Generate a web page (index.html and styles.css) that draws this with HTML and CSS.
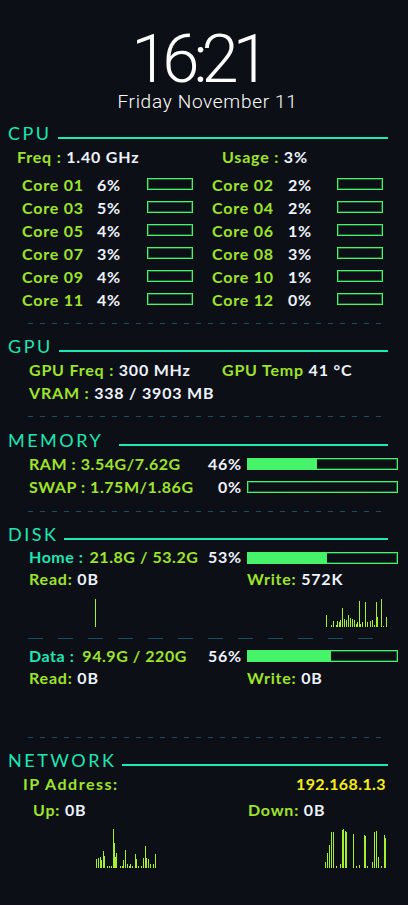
FILE: index.html
```html
<!DOCTYPE html>
<html>
<head>
<meta charset="utf-8">
<link rel="stylesheet" href="styles.css">
</head>
<body>
<div class="clock">16:21</div>
<div class="date">Friday November 11</div>

<div class="head m13"><span class="title">CPU</span><span class="rule"></span></div>
<div class="row freq">
  <span class="c205"><span class="lbl">Freq :</span> 1.40 GHz</span>
  <span><span class="lbl">Usage :</span> 3%</span>
</div>
<div class="cores">
  <div class="core"><span class="lbl">Core 01</span><span>6%</span><span class="cbar"></span><span></span><span class="lbl">Core 02</span><span>2%</span><span class="cbar"></span></div>
  <div class="core"><span class="lbl">Core 03</span><span>5%</span><span class="cbar"></span><span></span><span class="lbl">Core 04</span><span>2%</span><span class="cbar"></span></div>
  <div class="core"><span class="lbl">Core 05</span><span>4%</span><span class="cbar"></span><span></span><span class="lbl">Core 06</span><span>1%</span><span class="cbar"></span></div>
  <div class="core"><span class="lbl">Core 07</span><span>3%</span><span class="cbar"></span><span></span><span class="lbl">Core 08</span><span>3%</span><span class="cbar"></span></div>
  <div class="core"><span class="lbl">Core 09</span><span>4%</span><span class="cbar"></span><span></span><span class="lbl">Core 10</span><span>1%</span><span class="cbar"></span></div>
  <div class="core"><span class="lbl">Core 11</span><span>4%</span><span class="cbar"></span><span></span><span class="lbl">Core 12</span><span>0%</span><span class="cbar"></span></div>
</div>
<div class="dash m12"></div>

<div class="head m13"><span class="title">GPU</span><span class="rule"></span></div>
<div class="row p29">
  <span class="c193"><span class="lbl">GPU Freq :</span> 300 MHz</span>
  <span><span class="lbl">GPU Temp</span> 41 °C</span>
</div>
<div class="row p29"><span><span class="lbl">VRAM :</span> 338 / 3903 MB</span></div>
<div class="dash m12"></div>

<div class="head m14"><span class="title">MEMORY</span><span class="rule wide"></span></div>
<div class="row p29">
  <span class="mlabel lbl">RAM : 3.54G/7.62G</span><span class="pct">46%</span>
  <span class="bar"><span class="fill" style="width:46%"></span></span>
</div>
<div class="row p29">
  <span class="mlabel lbl">SWAP : 1.75M/1.86G</span><span class="pct">0%</span>
  <span class="bar"><span class="fill" style="width:0%"></span></span>
</div>
<div class="dash m13"></div>

<div class="head m13"><span class="title">DISK</span><span class="rule"></span></div>
<div class="row p29 h21">
  <span class="mlabel"><span class="teal">Home :</span><span class="lbl gapv">21.8G / 53.2G</span></span><span class="pct">53%</span>
  <span class="bar"><span class="fill" style="width:53%"></span></span>
</div>
<div class="row p29">
  <span class="c218"><span class="lbl">Read:</span> 0B</span>
  <span><span class="lbl">Write:</span> 572K</span>
</div>
<svg class="graph g30" viewBox="0 0 408 30" width="408" height="30">
  <g fill="#a6ee30">
    <rect x="95" y="2" width="1" height="28"/>
    <rect x="326" y="18" width="1" height="12"/>
    <rect x="331" y="28" width="1" height="2"/>
    <rect x="333" y="24" width="1" height="6"/>
    <rect x="336" y="28" width="1" height="2"/>
    <rect x="337" y="24" width="1" height="6"/>
    <rect x="339" y="25" width="1" height="5"/>
    <rect x="340" y="23" width="1" height="7"/>
    <rect x="342" y="11" width="1" height="19"/>
    <rect x="344" y="22" width="1" height="8"/>
    <rect x="346" y="23" width="1" height="7"/>
    <rect x="348" y="18" width="1" height="12"/>
    <rect x="350" y="21" width="1" height="9"/>
    <rect x="352" y="22" width="1" height="8"/>
    <rect x="354" y="23" width="1" height="7"/>
    <rect x="356" y="27" width="1" height="3"/>
    <rect x="357" y="25" width="1" height="5"/>
    <rect x="359" y="4" width="1" height="26"/>
    <rect x="360" y="27" width="1" height="3"/>
    <rect x="362" y="25" width="1" height="5"/>
    <rect x="365" y="5" width="1" height="25"/>
    <rect x="367" y="25" width="1" height="5"/>
    <rect x="370" y="24" width="1" height="6"/>
    <rect x="372" y="23" width="1" height="7"/>
    <rect x="374" y="28" width="1" height="2"/>
    <rect x="376" y="5" width="1" height="25"/>
    <rect x="377" y="20" width="1" height="10"/>
    <rect x="381" y="2" width="1" height="28"/>
    <rect x="383" y="29" width="1" height="1"/>
    <rect x="386" y="20" width="1" height="10"/>
  </g>
</svg>
<div class="dash long m11"></div>
<div class="row p29 h21 m6">
  <span class="mlabel"><span class="teal">Data :</span><span class="lbl gapd">94.9G / 220G</span></span><span class="pct">56%</span>
  <span class="bar data"><span class="fill" style="width:56%"></span></span>
</div>
<div class="row p29">
  <span class="c218"><span class="lbl">Read:</span> 0B</span>
  <span><span class="lbl">Write:</span> 0B</span>
</div>
<div class="dash m48"></div>

<div class="head m13"><span class="title">NETWORK</span><span class="rule"></span></div>
<div class="row ip">
  <span class="lbl iplbl">IP Address:</span><span class="yellow ipval">192.168.1.3</span>
</div>
<div class="row up m3">
  <span class="c215"><span class="lbl">Up:</span> 0B</span>
  <span><span class="lbl">Down:</span> 0B</span>
</div>
<svg class="graph g40" viewBox="0 0 408 40" width="408" height="40">
  <g fill="#a6ee30">
    <rect x="96" y="31" width="1" height="9"/>
    <rect x="98" y="30" width="1" height="10"/>
    <rect x="100" y="29" width="1" height="11"/>
    <rect x="101" y="32" width="1" height="8"/>
    <rect x="103" y="23" width="1" height="17"/>
    <rect x="104" y="28" width="1" height="12"/>
    <rect x="107" y="38" width="1" height="2"/>
    <rect x="109" y="38" width="1" height="2"/>
    <rect x="111" y="38" width="1" height="2"/>
    <rect x="113" y="1" width="1" height="39"/>
    <rect x="114" y="15" width="1" height="25"/>
    <rect x="115" y="29" width="1" height="11"/>
    <rect x="116" y="25" width="1" height="15"/>
    <rect x="120" y="38" width="1" height="2"/>
    <rect x="122" y="38" width="1" height="2"/>
    <rect x="123" y="32" width="1" height="8"/>
    <rect x="125" y="22" width="1" height="18"/>
    <rect x="127" y="36" width="1" height="4"/>
    <rect x="129" y="38" width="1" height="2"/>
    <rect x="130" y="36" width="1" height="4"/>
    <rect x="132" y="38" width="1" height="2"/>
    <rect x="135" y="26" width="1" height="14"/>
    <rect x="136" y="31" width="1" height="9"/>
    <rect x="138" y="38" width="1" height="2"/>
    <rect x="141" y="38" width="1" height="2"/>
    <rect x="143" y="30" width="1" height="10"/>
    <rect x="145" y="18" width="1" height="22"/>
    <rect x="146" y="30" width="1" height="10"/>
    <rect x="148" y="31" width="1" height="9"/>
    <rect x="150" y="36" width="1" height="4"/>
    <rect x="153" y="36" width="1" height="4"/>
    <rect x="155" y="26" width="1" height="14"/>

    <rect x="325" y="34" width="1" height="6"/>
    <rect x="327" y="25" width="1" height="15"/>
    <rect x="329" y="17" width="1" height="23"/>
    <rect x="331" y="4" width="1" height="36"/>
    <rect x="333" y="4" width="1" height="36"/>
    <rect x="336" y="38" width="1" height="2"/>
    <rect x="340" y="36" width="1" height="4"/>
    <rect x="342" y="2" width="1" height="38"/>
    <rect x="343" y="1" width="1" height="39"/>
    <rect x="345" y="3" width="1" height="37"/>
    <rect x="346" y="4" width="1" height="36"/>
    <rect x="353" y="6" width="1" height="34"/>
    <rect x="356" y="38" width="1" height="2"/>
    <rect x="359" y="37" width="1" height="3"/>
    <rect x="364" y="7" width="1" height="33"/>
    <rect x="365" y="8" width="1" height="32"/>
    <rect x="367" y="38" width="1" height="2"/>
    <rect x="372" y="34" width="1" height="6"/>
    <rect x="374" y="4" width="1" height="36"/>
    <rect x="376" y="3" width="1" height="37"/>
    <rect x="378" y="29" width="1" height="11"/>
    <rect x="381" y="38" width="1" height="2"/>
    <rect x="384" y="7" width="1" height="33"/>
    <rect x="385" y="10" width="1" height="30"/>
  </g>
</svg>
</body>
</html>
```
FILE: styles.css
```css
html, body {
  margin: 0;
  padding: 0;
}
body {
  width: 408px;
  height: 905px;
  overflow: hidden;
  background: #0c1016;
  color: #eef3ff;
  font-family: Lato, "Open Sans", sans-serif;
}

.clock {
  margin-top: 26px;
  height: 66px;
  line-height: 66px;
  font-family: Roboto, sans-serif;
  font-weight: 300;
  font-size: 67px;
  letter-spacing: -6px;
  text-align: center;
  padding-right: 13px;
  color: #ffffff;
}
.date {
  height: 19px;
  line-height: 19px;
  font-family: Roboto, sans-serif;
  font-weight: 300;
  font-size: 19px;
  letter-spacing: 0.7px;
  text-align: center;
  padding-left: 7px;
  color: #ffffff;
}

.head {
  display: flex;
  align-items: flex-start;
  height: 21px;
  padding: 0 20px 0 8px;
  font-weight: 400;
  font-size: 18px;
  line-height: 18px;
  letter-spacing: 2.5px;
  color: #1fe6b4;
}
.head .rule {
  flex: 1;
  height: 2px;
  margin-top: 13px;
  margin-left: 6px;
  background: #1de9b6;
}
.head .rule.wide {
  margin-left: 16px;
}

.row {
  display: flex;
  align-items: center;
  height: 23px;
  font-weight: 700;
  font-size: 16px;
  letter-spacing: 0.8px;
  white-space: nowrap;
}
.h21 { height: 21px; }
.p29 { padding-left: 29px; }
.freq { padding-left: 17px; }
.ip { padding: 0 22px 0 23px; justify-content: space-between; }
.iplbl { letter-spacing: 1.5px; }
.ipval { letter-spacing: 0.4px; }
.up { padding-left: 33px; }

.lbl { color: #9ee32c; }
.teal { color: #1fe6b4; }
.yellow { color: #f4ec18; }

.c205 { width: 205px; }
.c193 { width: 193px; }
.c218 { width: 218px; }
.c215 { width: 215px; }

.cores {
  margin-top: 5px;
  padding-left: 22px;
}
.core {
  display: grid;
  grid-template-columns: 75px 50px 46px 19px 76px 49px 46px;
  align-items: center;
  height: 23px;
  font-weight: 700;
  font-size: 16px;
  letter-spacing: 0.8px;
  white-space: nowrap;
}
.cbar {
  align-self: start;
  height: 12px;
  margin-top: 5px;
  box-sizing: border-box;
  border: 1px solid #46f26a;
  box-shadow: inset 0 0 0 1px rgba(70, 242, 106, 0.35);
}

.mlabel {
  width: 173px;
  letter-spacing: 0.55px;
}
.gapv { margin-left: 6px; }
.gapd { margin-left: 8px; }
.pct { width: 40px; text-align: right; }
.bar {
  display: block;
  align-self: flex-start;
  width: 151px;
  height: 12px;
  margin-top: 6px;
  box-sizing: border-box;
  border: 1px solid #46f26a;
  box-shadow: inset 0 0 0 1px rgba(70, 242, 106, 0.35);
  margin-left: 5px;
}
.bar.data { margin-top: 5px; }
.fill {
  display: block;
  height: 100%;
  background: #46f26a;
}

.dash {
  height: 1px;
  margin-left: 28px;
  margin-right: 23px;
  background: repeating-linear-gradient(90deg, #1c4e63 0 5px, transparent 5px 12px);
}
.dash.long {
  margin-right: 35px;
  background: repeating-linear-gradient(90deg, #1c4e63 0 15px, transparent 15px 30px);
}

.graph { display: block; }
.g30 { margin-top: 7px; }
.g40 { margin-top: 7px; }

.m3 { margin-top: 3px; }
.m6 { margin-top: 6px; }
.m11 { margin-top: 11px; }
.m12 { margin-top: 12px; }
.m13 { margin-top: 13px; }
.m14 { margin-top: 14px; }
.m48 { margin-top: 48px; }
```
